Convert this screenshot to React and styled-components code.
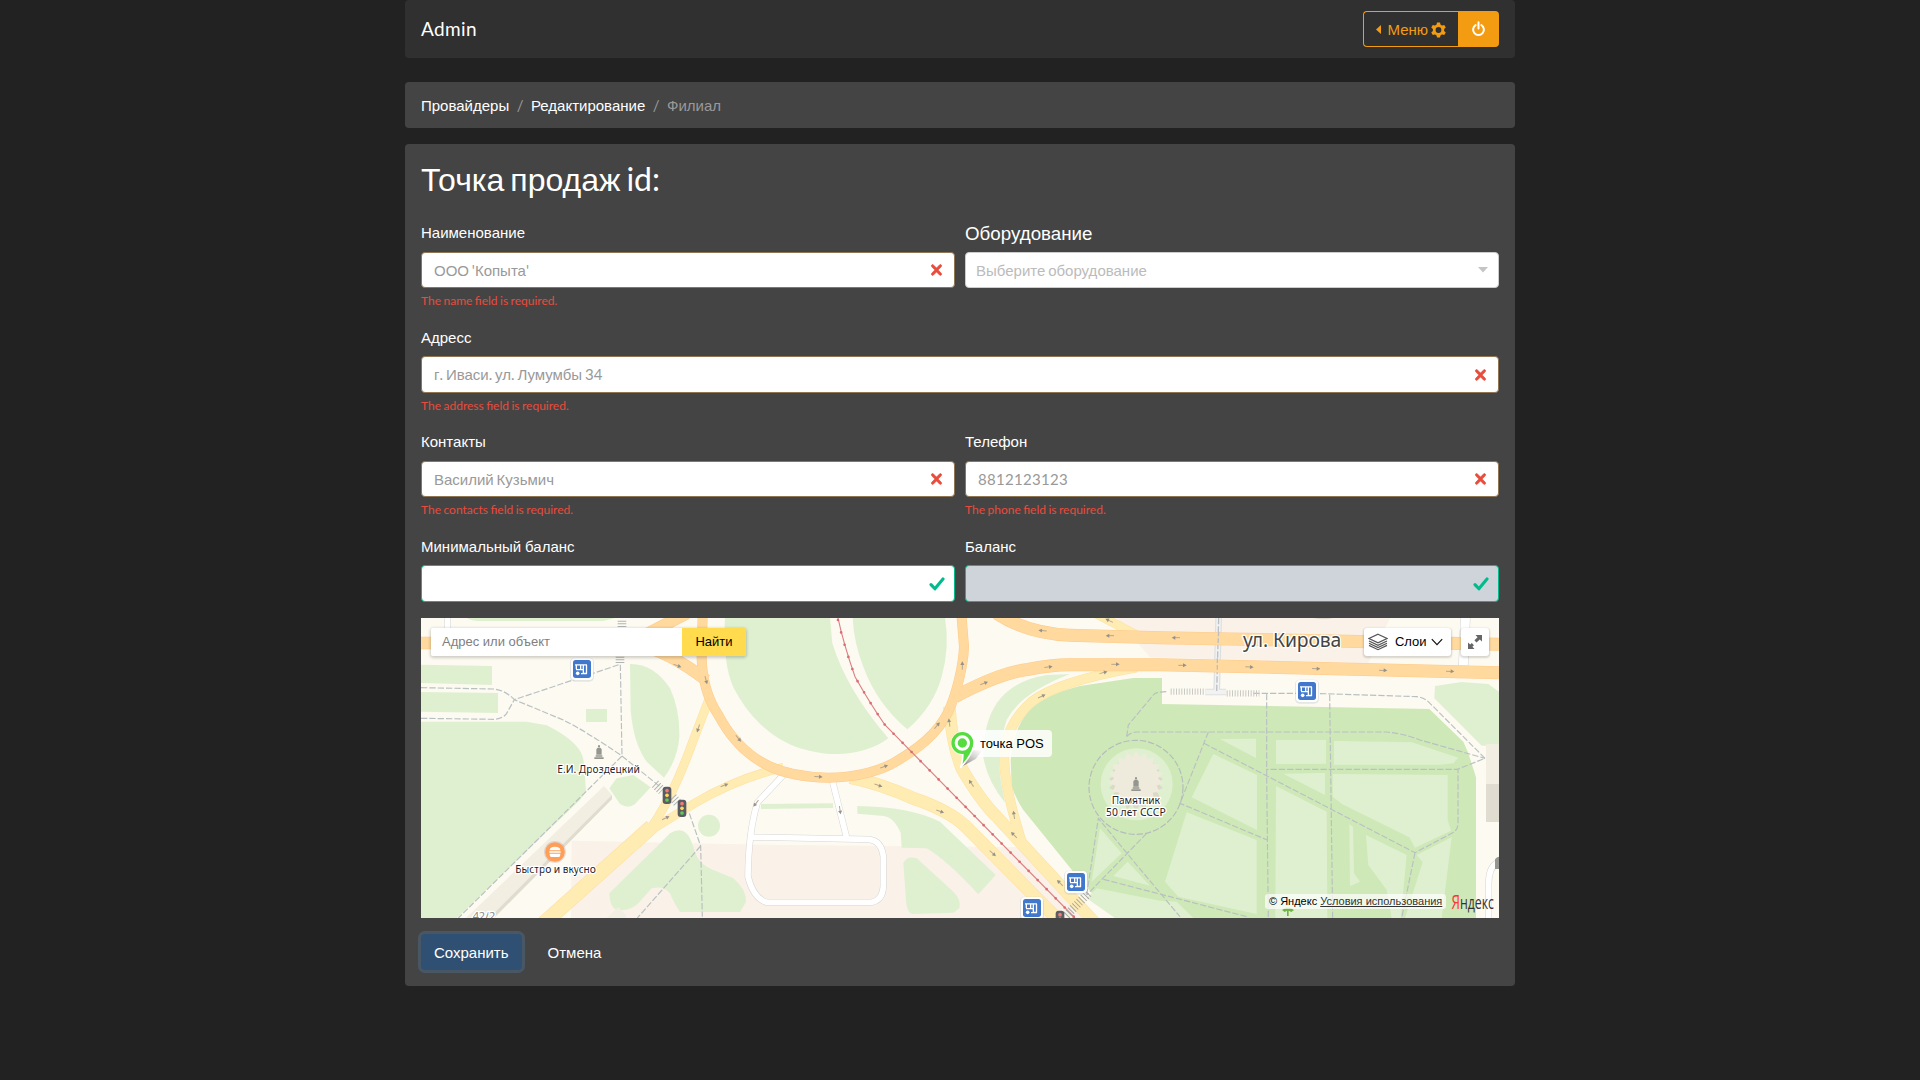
import React from "react";
import styled, { createGlobalStyle } from "styled-components";

const GlobalStyle = createGlobalStyle`
  *, *::before, *::after { box-sizing: border-box; }
  body {
    margin: 0;
    background: #222;
    color: #fff;
    font-family: Lato, "Liberation Sans", sans-serif;
    font-size: 15px;
    line-height: 1.5;
  }
`;

const CyrRun = styled.span`
  font-family: "Liberation Sans", Arial, sans-serif;
  line-height: 0;
`;

/* Cyrillic runs use the fallback face, everything else stays in Lato */
const T = ({ children }) =>
  children
    .split(/([\u0400-\u04FF]+)/)
    .map((part, i) => (i % 2 ? <CyrRun key={i}>{part}</CyrRun> : part));

const Container = styled.div`
  width: 1110px;
  margin: 0 auto;
  display: flex;
  flex-direction: column;
`;

const Navbar = styled.nav`
  height: 58px;
  padding: 0 16px;
  border-radius: 4px;
  background: #303030;
  display: flex;
  align-items: center;
  justify-content: space-between;
`;

const Brand = styled.span`
  font-size: 19px;
  letter-spacing: 0.4px;
`;

const ButtonGroup = styled.div`
  display: flex;
  height: 36px;
`;

const MenuButton = styled.button`
  width: 95px;
  padding: 1px 12px 0;
  display: flex;
  align-items: center;
  border: 1px solid #f39c12;
  border-right: 0;
  border-radius: 4px 0 0 4px;
  background: transparent;
  color: #f39c12;
  font: inherit;
  svg { flex: none; }
  svg:first-child { margin-right: 6.5px; }
  svg:last-child { margin-left: 2.5px; }
`;

const PowerButton = styled.button`
  width: 41px;
  padding: 0;
  display: flex;
  align-items: center;
  justify-content: center;
  border: 0;
  border-radius: 0 4px 4px 0;
  background: #f39c12;
`;

const Breadcrumb = styled.ol`
  list-style: none;
  margin: 24px 0 16px;
  height: 46px;
  padding: 0 16px;
  display: flex;
  align-items: center;
  gap: 7.5px;
  border-radius: 4px;
  background: #444;
`;

const Crumb = styled.li`
  color: ${(p) => (p.$muted ? "#999" : "#fff")};
`;

const Card = styled.section`
  height: 842px;
  padding: 16px;
  border-radius: 4px;
  background: #444;
`;

const Title = styled.h2`
  margin: 1px 0 24.3px;
  height: 36px;
  font-size: 32px;
  font-weight: 400;
  line-height: 36px;
  word-spacing: -2.2px;
`;

const Row = styled.div`
  display: flex;
  gap: 10px;
  height: ${(p) => (p.$last ? "83.2px" : "104.5px")};
`;

const Field = styled.div`
  flex: 1;
  min-width: 0;
`;

const Label = styled.div`
  height: 30.5px;
  line-height: 23.1px;
  font-size: ${(p) => (p.$large ? "18.75px" : "15px")};
`;

const borders = { invalid: "#8f7552", valid: "#00bc8c", plain: "#ccc" };
const insets = { invalid: "0 11px 0 12px", valid: "0 9.5px 0 12px", plain: "0 10px" };

const Control = styled.div`
  height: 36.5px;
  padding: ${(p) => insets[p.$state]};
  display: flex;
  align-items: center;
  justify-content: space-between;
  border: 1px solid ${(p) => borders[p.$state]};
  border-radius: 4px;
  background: ${(p) => (p.$disabled ? "#ced4da" : "#fff")};
  color: ${(p) => (p.$state === "plain" ? "#bbb" : "#999")};
  word-spacing: -1px;
  svg { margin-left: auto; flex: none; }
`;

const Digits = styled.span`
  letter-spacing: 0.3px;
`;

const Feedback = styled.div`
  margin-top: 4px;
  font-size: 12px;
  line-height: 18px;
  word-spacing: -0.6px;
  color: #e74c3c;
`;

const MapBox = styled.div`
  position: relative;
  width: 1078px;
  height: 300px;
  overflow: hidden;
  font: 13px "Liberation Sans", Arial, sans-serif;
  color: #000;
  > svg { display: block; }
`;

const MapSearch = styled.div`
  position: absolute;
  left: 10px;
  top: 10px;
  display: flex;
  width: 315px;
  height: 28px;
  line-height: 27px;
  border-radius: 3px;
  box-shadow: 0 1px 3px 1px rgba(0, 0, 0, 0.18);
`;

const SearchInput = styled.div`
  flex: 1;
  padding-left: 11px;
  background: #fff;
  color: #808080;
  border-radius: 2px 0 0 2px;
`;

const SearchButton = styled.div`
  width: 64px;
  text-align: center;
  background: #ffdb4d;
  border-radius: 0 2px 2px 0;
`;

const MapButton = styled.div`
  position: absolute;
  top: 10px;
  right: ${(p) => p.$right}px;
  width: ${(p) => p.$width}px;
  height: 28px;
  padding-right: ${(p) => p.$inset || 0}px;
  display: flex;
  align-items: center;
  justify-content: center;
  line-height: 26px;
  border-radius: 3px;
  background: #fff;
  box-shadow: 0 1px 2px 1px rgba(0, 0, 0, 0.15);
`;

const LayersCaption = styled.span`
  margin: 0 4px 0 6.5px;
`;

const PinCaption = styled.div`
  position: absolute;
  left: 542px;
  top: 112px;
  width: 89px;
  height: 27px;
  padding-left: 17px;
  line-height: 27px;
  border-radius: 4px;
  background: rgba(255, 255, 255, 0.82);
`;

const PinIcon = styled.svg`
  position: absolute;
  left: 524.4px;
  top: 107.3px;
`;

const Copyright = styled.div`
  position: absolute;
  left: 844px;
  top: 276px;
  height: 15px;
  padding: 0 4px;
  line-height: 15px;
  font-size: 11px;
  white-space: nowrap;
  border-radius: 3px;
  background: rgba(255, 255, 255, 0.7);
  u { color: #333; }
`;

const Logo = styled.svg`
  position: absolute;
  left: 1030px;
  top: 272px;
`;

const Actions = styled.div`
  display: flex;
  gap: 13px;
  margin-top: 16px;
`;

const Button = styled.button`
  height: 36px;
  padding: 0 13px;
  border: 0;
  border-radius: 4px;
  color: #fff;
  font: inherit;
  background: ${(p) => (p.$primary ? "#2f5073" : "transparent")};
  box-shadow: ${(p) => (p.$primary ? "0 0 0 3px #495765" : "none")};
`;

const CrossMark = () => (
  <svg width="13" height="20" viewBox="114 105 384 582">
    <path fill="#e74c3c" stroke="#e74c3c" strokeWidth="20" d="M447 544.4c-14.4 14.4-37.6 14.4-51.9 0L306 451.7l-89.1 92.7c-14.4 14.4-37.6 14.4-51.9 0-14.4-14.4-14.4-37.6 0-51.9l92.4-96.4-92.5-96.4c-14.3-14.4-14.3-37.6 0-51.9 14.3-14.4 37.6-14.4 51.9 0l89.2 92.7 89.1-92.7c14.4-14.4 37.6-14.4 51.9 0 14.4 14.4 14.4 37.6 0 51.9L354.7 396l92.4 96.4c14.3 14.4 14.3 37.6-.1 52z" />
  </svg>
);

const CheckMark = () => (
  <svg width="16" height="14" viewBox="0 0 16 14">
    <path d="M2 7.600 5.900 11.800 14 2" fill="none" stroke="#00bc8c" strokeWidth="3.100" strokeLinecap="round" strokeLinejoin="round" />
  </svg>
);

const Gear = () => (
  <svg width="15" height="16" viewBox="-7.5 -8 15 16">
    <circle r="4.3" fill="none" stroke="#f39c12" strokeWidth="2.8" />
    {[0, 60, 120, 180, 240, 300].map((a) => (
      <path key={a} transform={`rotate(${a})`} d="M-1.5-7.5h3l.6 2.8h-4.2z" fill="#f39c12" />
    ))}
  </svg>
);

const Transit = ({ x, y }) => (
  <g transform={`translate(${x} ${y})`}>
    <rect x="-36" y="-34" width="72" height="72" rx="14" fill="#9ab" opacity=".25" />
    <rect x="-33" y="-33" width="66" height="66" rx="12" fill="#fff" />
    <rect x="-27" y="-27" width="54" height="54" rx="8" fill="#4178cc" />
    <path d="M-21-12.500H15M-17-12V0M-18 2H3M-4-12V2M4-12V14H-3M13.500-12V14M2 13.500H15" fill="none" stroke="#fff" strokeWidth="4" />
    <circle cx="-13" cy="13" r="5.500" fill="#fff" />
  </g>
);

const TrafficLight = ({ x, y }) => (
  <g transform={`translate(${x} ${y})`}>
    <rect x="-13" y="-26" width="26" height="52" rx="9" fill="#5b5b62" />
    <circle cy="-14" r="5.5" fill="#f47a78" />
    <circle cy="0" r="5.5" fill="#ffd85a" />
    <circle cy="14" r="5.5" fill="#5fca57" />
  </g>
);

const Monument = ({ x, y }) => (
  <g transform={`translate(${x} ${y})`} fill="#969690">
    <path d="M-14 15h28v5h-28zM-10 9h20v4h-20zM-8 7V-9l4-5h8l4 5V7zM-3-21h6v6h-6z" />
  </g>
);

const arrows = [
  [832, 197, 20], [918, 240, 75], [895, 385, 108], [1015, 415, 50], [973, 556, -22], [797, 654, -25],
  [1068, 610, 128], [1255, 530, 3], [1452, 500, -18], [1611, 377, -50], [1687, 197, -90], [1752, 250, -22],
  [1945, 201, -6], [2146, 193, 0], [2347, 196, 0], [2548, 201, 2], [2748, 206, 2], [2949, 211, 2], [3150, 214, 2],
  [1928, 92, 184], [2130, 107, 180], [2328, 113, 180], [2128, 62, 205], [1925, 289, -25], [2110, 218, -14],
  [1648, 368, -98], [1714, 550, 235], [1842, 645, -98], [1842, 705, 225], [1980, 849, 225], [1435, 556, 18],
  [1620, 634, 18], [1778, 760, 42], [1320, 630, 82],
];

const Casing = ({ roads, color }) =>
  roads.map(([d, w]) => <path key={d} d={d} fill="none" stroke={color} strokeWidth={w + 3} />);

const Surface = ({ roads, color }) =>
  roads.map(([d, w]) => <path key={d} d={d} fill="none" stroke={color} strokeWidth={w} />);

const orangeRoads = [
  ["M63 129H700Q810 155 918 240", 34],
  ["M690 129 860 40", 34],
  ["M908 40 905 175C907 240 925 300 955 345C1000 430 1070 500 1180 522C1290 545 1400 530 1475 492C1550 450 1610 405 1645 335C1668 285 1690 200 1692 140L1684 40", 27],
  ["M1665 290C1770 235 1830 215 1885 208Q1950 194 2010 194H2280L3297 218", 36],
  ["M1790 40Q1880 100 2010 106L2280 113 3297 133", 36],
];

const yellowRoads = [
  ["M930 290 880 420Q830 560 775 650L745 695", 24],
  ["M740 698 880 612Q1010 535 1150 502", 24],
  ["M755 680 420 980", 42],
  ["M1350 532Q1440 550 1540 595Q1650 632 1700 682L1995 980", 36],
  ["M1648 320Q1655 430 1685 505Q1740 600 1790 650L2100 985", 34],
  ["M1868 735Q1808 550 1813 460Q1822 370 1895 305Q1970 245 2210 202", 27],
  ["M2090 42 2210 105", 24],
];

const whiteRoads = [
  ["M1155 520 1072 608Q1045 700 1044 830Q1060 895 1100 907H1415Q1448 900 1450 860V770Q1445 722 1405 718L1044 711", 17],
  ["M1298 546 1340 714", 17],
  ["M3197 40 3190 197", 27],
  ["M143 40V100", 16],
  ["M3300 785Q3266 795 3266 850V954", 17],
];

const footpaths = [
  "M63 263 280 267Q315 270 343 299L657 194M63 355 285 358Q310 355 320 340L343 299 490 360Q560 395 666 468L780 560M661 194 666 468 175 954",
  "M868 640 902 738 907 950M902 738 712 954",
  "M2180 410 2185 375 2260 285Q2265 275 2300 275M2180 410Q2190 397 2210 396H2960Q3010 400 3060 420L3255 475",
  "M2600 282V530L2605 954M2560 280H2740L3050 290Q3075 293 3090 310L3255 475 3172 508H2600M2789 285 2798 954M2425 396 2340 610 2602 720M2412 430 3045 758 3155 700Q3176 690 3174 665V508M3045 758 3005 954",
  "M2240 700 2060 885M2060 885 2095 655 2210 795 2340 950M2110 838 2310 890 2540 950",
];

const lightPark = [
  "2100,685 2165,760 2075,845", "2183,785 2250,857 2140,828",
  "2060,895 2090,865 2280,902 2330,905 2380,954 2145,954",
  "2295,845 2360,637 2570,720 2570,942 2335,890",
  "2460,417 2568,416 2568,474", "2628,420 2778,420 2778,491 2628,492",
  "2802,423 3035,427 3175,473 3160,490 3120,494 2802,494",
  "2440,462 2571,525 2571,690 2375,592", "2650,521 2775,519 2775,585",
  "2798,522 3143,525 3143,660 3153,692 3045,743 3028,712 2826,612 2798,590",
  "2628,558 2780,635 2782,954 2626,954", "2848,673 2859,680 2862,820 2880,845 2850,858",
  "2898,705 3020,765 3002,954 2975,954 2960,870 2905,795",
  "3155,712 3125,954 3015,954 3068,787 3050,765",
];

const greens = [
  "M63 194 276 198V255L63 249zM63 276 294 279V339L63 335zM558 327h63v39h-63zM200 54Q215 63 230 63H610L645 54z",
  "M63 365H380L440 376Q550 430 552 490L558 575 540 600 180 945 170 954H63z",
  "M690 192Q760 190 810 265Q840 330 838 410Q832 480 792 533L740 485Q700 430 692 330z",
  "M628 565 650 535 700 525 752 562 705 612Q685 628 660 612Z",
  "M628 880 770 740 810 700Q850 675 870 715L880 740Q890 790 940 810L1000 835Q1040 870 1038 905L1020 936H840Q825 915 810 880Q790 855 755 865L715 910Q690 935 650 930Q628 920 628 880z",
  "M975 54C970 140 978 230 1010 280C1060 370 1130 420 1200 445C1250 460 1290 465 1330 461C1390 458 1440 435 1465 415Q1340 270 1297 130L1290 54z",
  "M1358 54Q1362 130 1390 200Q1430 310 1522 388Q1600 320 1625 230Q1650 140 1635 54z",
  "M2010 222 1940 225Q1840 240 1790 310Q1750 370 1750 470Q1760 540 1815 608L1802 540Q1790 450 1820 360Q1860 280 2010 222z",
  "M1372 618Q1530 620 1620 665L1787 825 1735 883Q1640 780 1580 745L1505 743 1502 698Q1480 650 1450 648L1372 641z",
  "M1510 790Q1520 765 1550 775L1660 875Q1685 900 1678 925L1660 938 1535 942Q1520 935 1518 900z",
  "M1083 612 1299 610V624L1083 627z",
  "M3105 258 3185 246 3265 252 3297 275V437H3245L3103 295z",
];

const MapText = styled.text`
  font-family: "Noto Sans", sans-serif;
  fill: ${(p) => p.$fill || "#222229"};
  stroke: #fff;
  stroke-width: 8px;
  stroke-linejoin: round;
  paint-order: stroke;
`;

const gearStar = Array.from({ length: 36 }, (_, i) => {
  const a = (i * Math.PI) / 18;
  const r = i % 2 ? 66 : 82;
  return `${(2208 + r * Math.sin(a)).toFixed(1)},${(535 - r * Math.cos(a)).toFixed(1)}`;
}).join(" ");

const StreetMap = () => (
  <svg width="1078" height="300" viewBox="63 54 3234 900">
    <path fill="#fdfaf1" d="M0 0H3400V1000H0z" />
    <path fill="#faf1e8" d="M515 722 1140 735 1900 742 2080 954H513zM2150 54H2970L2904 190 2250 172z" />
    {greens.map((d) => <path key={d} d={d} fill="#dff0d0" />)}
    <circle cx="927" cy="677" r="33" fill="#dff0d0" />
    <path fill="#cfe8b8" d="M2286 234H2200L2040 258Q1930 285 1885 335Q1838 390 1832 480L1835 560Q1850 600 1870 630L2040 840 2145 954H3228V532L3205 460 3190 425 3088 327 2286 312z" />
    {lightPark.map((p) => <polygon key={p} points={p} fill="#dff0d0" />)}
    <circle cx="2210" cy="553" r="108" fill="#dff0d0" />
    <polygon points={gearStar} transform="translate(0 15)" fill="#dcd9c7" />
    <polygon points={gearStar} fill="#eeebdc" />
    <path fill="#f2eee2" d="M612 558 636 585V597L282 954H198zM620 954 655 922 678 945V954zM3258 432h39v120h-39z" />
    <path fill="#e0dccf" d="M636 585V597L282 954H268zM3258 552h39v114h-39zM2740 54h60q-28 8-60 0z" />

    {footpaths.map((d) => <path key={d} d={d} fill="none" stroke="#b9c0c1" strokeWidth="3.500" strokeDasharray="19 6" />)}
    <circle cx="2208" cy="562" r="141" fill="none" stroke="#b4bcbc" strokeWidth="3.500" strokeDasharray="19 6" />
    <path d="M2456 54 2450 276M2416 276H2478" fill="none" stroke="#dcdfe0" strokeWidth="20" />
    <path d="M2456 54 2450 276M2416 276H2478" fill="none" stroke="#f2f2f2" strokeWidth="13" />
    <path d="M2456 54 2450 276" stroke="#b9bfc2" strokeWidth="4" strokeDasharray="19 6" />
    <path d="M2312 275H2415M2480 280H2578" stroke="#c8c9c5" strokeWidth="19" strokeDasharray="3 5" />

    <Casing roads={whiteRoads} color="#d5d5d3" />
    <Surface roads={whiteRoads} color="#fff" />
    <Casing roads={yellowRoads} color="#ffe0a0" />
    <Surface roads={yellowRoads} color="#ffecb3" />
    <Casing roads={orangeRoads} color="#ffca8c" />
    <Surface roads={orangeRoads} color="#ffd99d" />
    <path d="M2456 95 2454 134M2452 175V213" stroke="#b9bfc2" strokeWidth="4" strokeDasharray="14 6" />

    <path d="M1314 54Q1330 130 1365 230Q1410 310 1455 375L2025 954" fill="none" stroke="#dd8184" strokeWidth="3.500" />
    <path d="M1314 60Q1330 130 1365 230Q1410 310 1455 375L2025 954" fill="none" stroke="#d96b72" strokeWidth="8" strokeLinecap="round" strokeDasharray="0 38.5" />

    <path d="M666 62V84M660 170V192" stroke="#b0b4b4" strokeWidth="26" strokeDasharray="3 5" />
    <path d="M765 552 786 572M818 592 836 612" stroke="#b0b4b4" strokeWidth="28" strokeDasharray="3 6" />
    <path d="M2065 880 1995 950" stroke="#a9a9a2" strokeWidth="26" strokeDasharray="3 6" />

    {arrows.map(([x, y, a]) => (
      <g key={`${x}-${y}`} transform={`translate(${x} ${y}) rotate(${a})`}>
        <path d="M-12 0H4" stroke="#b9a78c" strokeWidth="3" />
        <path d="M2-6 13 0 2 6z" fill="#95928b" />
      </g>
    ))}

    <Transit x={546} y={207} />
    <Transit x={2028} y={846} />
    <Transit x={1896} y={924} />
    <Transit x={2721} y={273} />
    <TrafficLight x={801} y={586} />
    <TrafficLight x={846} y={625} />
    <TrafficLight x={1980} y={958} />
    <Monument x={597} y={457} />
    <Monument x={2208} y={553} />
    <path d="M3285 778q5-8 12-8v37h-12z" fill="#969690" />
    <path d="M2646 930q18-14 36 0l-8 6-8-4v16h-5v-16l-7 4z" fill="#6fb544" />

    <circle cx="465" cy="756" r="33" fill="#a88" opacity=".25" />
    <circle cx="465" cy="756" r="29.5" fill="#ff9f57" />
    <path d="M449 751q0-11 16-11t16 11zM448 754h34v4h-34zM449 761h32q0 10-6 10h-20q-6 0-6-10z" fill="#fff" />

    <MapText x="472" y="519" fontSize="31" textLength="248">Е.И. Дроздецкий</MapText>
    <MapText x="346" y="818" fontSize="31" textLength="242">Быстро и вкусно</MapText>
    <MapText x="2135" y="612" fontSize="31" textLength="145">Памятник</MapText>
    <MapText x="2118" y="647" fontSize="31" textLength="179">50 лет СССР</MapText>
    <MapText x="2529" y="141" fontSize="58" textLength="295" $fill="#444">ул. Кирова</MapText>
    <MapText x="218" y="959" fontSize="33" textLength="68" $fill="#888">42/2</MapText>
  </svg>
);

const YandexMap = () => (
  <MapBox>
    <StreetMap />
    <MapSearch>
      <SearchInput>Адрес или объект</SearchInput>
      <SearchButton>Найти</SearchButton>
    </MapSearch>
    <MapButton $right={48} $width={87} $inset={4}>
      <svg width="20" height="18" viewBox="0 0 20 18" fill="none" stroke="#555" strokeWidth="1.2">
        <path d="M10 1.200 19 5.500 10 9.800 1 5.500z" />
        <path d="M1 8 10 12.300 19 8M1 10.200 10 14.500 19 10.200M1 12.400 10 16.700 19 12.400" />
      </svg>
      <LayersCaption>Слои</LayersCaption>
      <svg width="12" height="8" viewBox="0 0 12 8" fill="none" stroke="#111" strokeWidth="1.2">
        <path d="M.8 1.2 6 6.6 11.2 1.2" />
      </svg>
    </MapButton>
    <MapButton $right={10} $width={28}>
      <svg width="16" height="16" viewBox="0 0 16 16" fill="#666">
        <path d="M15 1v6.5L12.8 5.4 9.5 8.4 7.4 6.3l3.2-3.1L8.5 1z" />
        <path d="M1 15V8.500L3.200 10.600 4.800 9.100 6.900 11.200 5.400 12.800 7.500 15z" />
      </svg>
    </MapButton>
    <PinCaption>точка POS</PinCaption>
    <PinIcon width="50" height="44" viewBox="-4 -4 150 132">
      <defs>
        <linearGradient id="pinShade" x1="0" y1="1" x2="1" y2="0">
          <stop offset="0" stopColor="#555" stopOpacity=".85" />
          <stop offset="1" stopColor="#999" stopOpacity="0" />
        </linearGradient>
      </defs>
      <path d="M44 122 74 72 108 72 88 98z" fill="url(#pinShade)" />
      <path d="M43 123C48 106 51 94 49 83A33 33 0 1 1 81 59C79 80 60 104 43 123z" fill="#56db40" stroke="#fff" strokeWidth="5" strokeLinejoin="round" />
      <circle cx="48" cy="50" r="33" fill="#56db40" />
      <circle cx="48" cy="50" r="18.500" fill="#56db40" stroke="#fff" strokeWidth="9" />
    </PinIcon>
    <Copyright>© Яндекс <u>Условия использования</u></Copyright>
    <Logo width="48" height="26" viewBox="0 0 48 26" fontFamily="Open Sans, sans-serif">
      <text x="0.500" y="19" fontSize="20" textLength="8.500" lengthAdjust="spacingAndGlyphs" fill="#f33">Я</text>
      <text x="9" y="19" fontSize="18" textLength="34" lengthAdjust="spacingAndGlyphs" fill="#333">ндекс</text>
    </Logo>
  </MapBox>
);

const TextField = ({ label, placeholder, state = "invalid", error, disabled, large }) => {
  const Value = /^\d+$/.test(placeholder || "") ? Digits : "span";
  return (
    <Field>
      <Label $large={large}><T>{label}</T></Label>
      <Control $state={state} $disabled={disabled}>
        {placeholder && <Value><T>{placeholder}</T></Value>}
        {state === "invalid" && <CrossMark />}
        {state === "valid" && <CheckMark />}
        {state === "plain" && (
          <svg width="10" height="6" viewBox="0 0 10 6"><path d="M0 0h10L5 5.500z" fill="#c4c4c4" /></svg>
        )}
      </Control>
      {error && <Feedback>{error}</Feedback>}
    </Field>
  );
};

export default function App() {
  return (
    <>
      <GlobalStyle />
      <Container>
        <Navbar>
          <Brand>Admin</Brand>
          <ButtonGroup>
            <MenuButton>
              <svg width="5" height="9" viewBox="0 0 5 9"><path d="M5 0v9L0 4.500z" fill="#f39c12" /></svg>
              <T>Меню</T>
              <Gear />
            </MenuButton>
            <PowerButton>
              <svg width="15" height="16" viewBox="0 0 15 16" fill="none" stroke="#fff" strokeWidth="2" strokeLinecap="round">
                <path d="M4.600 4.100A5.400 5.400 0 1 0 10.400 4.100M7.500 1.200V7.500" />
              </svg>
            </PowerButton>
          </ButtonGroup>
        </Navbar>
        <Breadcrumb>
          <Crumb><T>Провайдеры</T></Crumb>
          <Crumb $muted>/</Crumb>
          <Crumb><T>Редактирование</T></Crumb>
          <Crumb $muted>/</Crumb>
          <Crumb $muted><T>Филиал</T></Crumb>
        </Breadcrumb>
        <Card>
          <Title><T>Точка продаж id:</T></Title>
          <Row>
            <TextField label="Наименование" placeholder="ООО 'Копыта'" error="The name field is required." />
            <TextField label="Оборудование" placeholder="Выберите оборудование" state="plain" large />
          </Row>
          <Row>
            <TextField label="Адресс" placeholder="г. Иваси. ул. Лумумбы 34" error="The address field is required." />
          </Row>
          <Row>
            <TextField label="Контакты" placeholder="Василий Кузьмич" error="The contacts field is required." />
            <TextField label="Телефон" placeholder="8812123123" error="The phone field is required." />
          </Row>
          <Row $last>
            <TextField label="Минимальный баланс" state="valid" />
            <TextField label="Баланс" state="valid" disabled />
          </Row>
          <YandexMap />
          <Actions>
            <Button $primary><T>Сохранить</T></Button>
            <Button><T>Отмена</T></Button>
          </Actions>
        </Card>
      </Container>
    </>
  );
}
